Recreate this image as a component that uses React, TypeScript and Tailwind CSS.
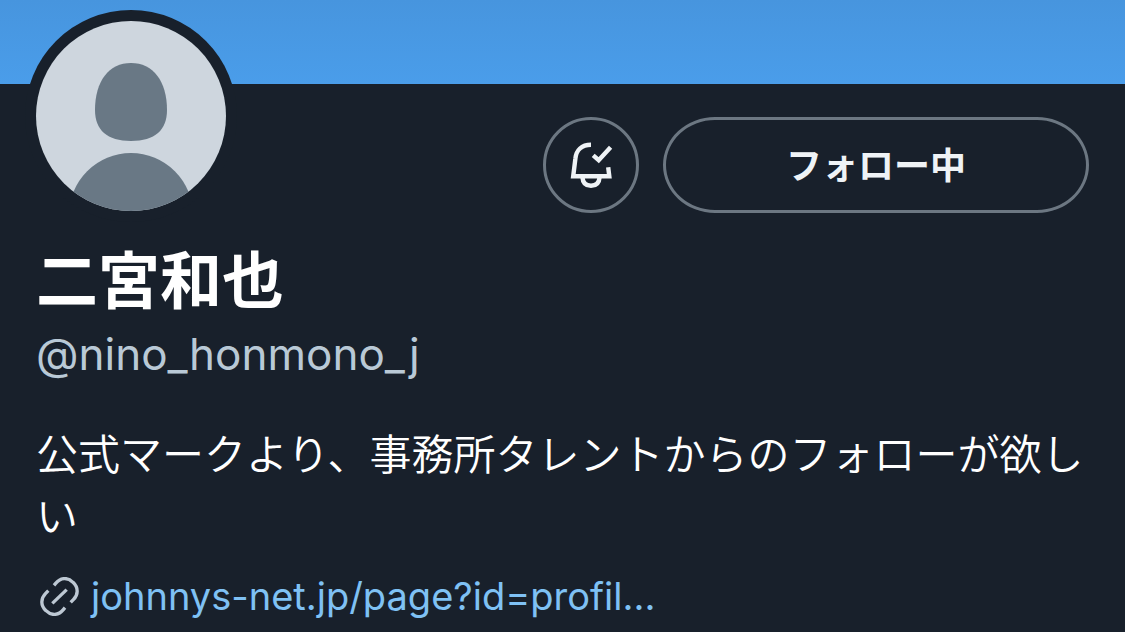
function Avatar() {
  return (
    <svg viewBox="0 0 190 190" className="block size-full" role="img" aria-label="プロフィール画像">
      <defs>
        <clipPath id="avatar-clip">
          <circle cx="95" cy="95" r="95" />
        </clipPath>
      </defs>
      <g clipPath="url(#avatar-clip)">
        <rect width="190" height="190" fill="#ced6de" />
        <path
          d="M95 42C117 42 131 60 131 89C131 109 119 120 95 120C71 120 59 109 59 89C59 60 73 42 95 42Z"
          fill="#697885"
        />
        <circle cx="95" cy="194" r="62" fill="#697885" />
      </g>
    </svg>
  );
}

function BellCheckIcon() {
  return (
    <svg viewBox="0 0 48 48" className="size-12" fill="none" stroke="currentColor" strokeWidth="4.4" aria-hidden="true">
      <path d="M24 3.8C14.5 3.8 9.2 9.5 8.4 17.5L6.2 35.2H42.3L41.2 26.2" />
      <path d="M15.4 36C15.8 42.5 19.2 44.8 24 44.8C28.8 44.8 32.2 42.5 32.6 36" />
      <path d="M26.2 14.3L31.7 19.2L43.6 6.2" />
    </svg>
  );
}

function LinkIcon() {
  return (
    <svg
      viewBox="60 51 117 117"
      className="size-[39px] shrink-0"
      fill="none"
      stroke="currentColor"
      strokeWidth="10"
      aria-hidden="true"
    >
      <path d="M102 76L107 70C122 52 143 51 159 67C176 83 175 104 160 119L152 127" />
      <path d="M135 143L130 149C115 167 94 168 78 152C61 136 62 115 77 100L85 92" />
      <path d="M97 130L140 89" />
    </svg>
  );
}

export default function App() {
  return (
    <div className="min-h-screen bg-[#18202b] font-[Inter,'Noto_Sans_CJK_JP',sans-serif] text-white">
      <div className="h-[84px] bg-linear-to-b from-[#4795de] to-[#4a9dea]" />
      <main className="px-9">
        <div className="flex items-start justify-between">
          <div className="-mt-[74px] -ml-[11px] size-[212px] shrink-0 rounded-full bg-[#18202b] p-[11px]">
            <Avatar />
          </div>
          <div className="mt-[33px] flex gap-6">
            <button
              type="button"
              aria-label="通知"
              className="flex size-24 items-center justify-center rounded-full border-3 border-[#6c7782] text-[#eff3f6]"
            >
              <BellCheckIcon />
            </button>
            <button
              type="button"
              className="h-24 w-[426px] rounded-[52px/48px] border-3 border-[#6c7782] pt-0.5 text-[36px] font-bold text-[#eff3f6]"
            >
              フォロー中
            </button>
          </div>
        </div>
        <h1 className="mt-6 text-[62px] leading-[72px] font-bold">二宮和也</h1>
        <p className="mt-[10px] text-[44px] leading-[52px] text-[#b9c9d6]">@nino_honmono_j</p>
        <p className="mt-11 text-[42px] leading-[62px] font-[350]">
          公式マークより、事務所タレントからのフォローが欲しい
        </p>
        <div className="mt-[22px] flex items-center gap-3 pl-1">
          <span className="text-[#bdc8d3]">
            <LinkIcon />
          </span>
          <a href="#profile" className="text-[38px] leading-[52px] text-[#7fc1f4]">
            johnnys-net.jp/page?id=profil...
          </a>
        </div>
      </main>
    </div>
  );
}
